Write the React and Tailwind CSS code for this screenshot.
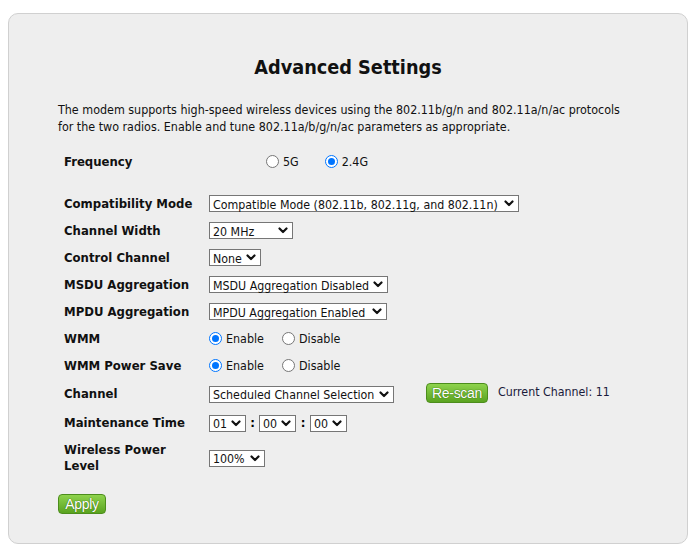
import React from 'react';

const font = { fontFamily: '"DejaVu Sans Condensed", "DejaVu Sans", Verdana, sans-serif' };

const Chevron = () => (
  <svg width="10" height="7" viewBox="0 0 10 7" className="shrink-0">
    <polyline points="1.5,1.5 5,5 8.5,1.5" fill="none" stroke="#111" strokeWidth="2.2" strokeLinecap="round" strokeLinejoin="round" />
  </svg>
);

const FakeSelect = ({ value, width }) => (
  <div
    className="flex items-center justify-between h-[17px] border border-[#767676] bg-white pl-[3px] pr-[4px] text-[12.3px] text-[#111] leading-[14px]"
    style={{ width }}
  >
    <span className="whitespace-nowrap translate-y-[1px]">{value}</span>
    <Chevron />
  </div>
);

const Radio = ({ checked, label }) => (
  <div className="flex items-center gap-[4px] text-[12.4px] text-[#111]">
    {checked ? (
      <span className="w-[13px] h-[13px] rounded-full border-[1.5px] border-[#0075ff] bg-white flex items-center justify-center">
        <span className="w-[7px] h-[7px] rounded-full bg-[#0075ff]" />
      </span>
    ) : (
      <span className="w-[13px] h-[13px] rounded-full border border-[#767676] bg-white" />
    )}
    <span className="translate-y-[1px]">{label}</span>
  </div>
);

const GreenButton = ({ children, className }) => (
  <button
    className={`h-[20px] rounded-[4px] border border-[#4c8d1c] bg-gradient-to-b from-[#8ed34c] to-[#5aa31f] text-white text-[14px] leading-none ${className}`}
    style={{ fontFamily: '"Liberation Sans", Arial, sans-serif', textShadow: '0 0 1px #3a7010, 0 0 1px #3a7010', letterSpacing: '-0.3px' }}
  >
    {children}
  </button>
);

const Row = ({ label, h = 'h-[27px]', children }) => (
  <div className={`flex items-center ${h}`}>
    <div className="w-[145px] text-[13px] font-bold text-[#111] leading-[16px]">{label}</div>
    <div className="flex items-center">{children}</div>
  </div>
);

export default function App() {
  return (
    <div className="min-h-[544px] bg-white pl-[8px] pt-[13px]" style={font}>
      <div className="w-[680px] h-[531px] rounded-[10px] border border-[#d0d0d0] bg-[#eeeeee] pl-[49px]">
        <h1 className="pt-[42px] pr-[49px] text-center text-[19.7px] font-bold text-[#111] leading-[24px]">
          Advanced Settings
        </h1>
        <p className="mt-[21px] text-[12.4px] leading-[17px] text-[#111]">
          The modem supports high-speed wireless devices using the 802.11b/g/n and 802.11a/n/ac protocols
          <br />
          for the two radios. Enable and tune 802.11a/b/g/n/ac parameters as appropriate.
        </p>

        <div className="mt-[13px] pl-[6px] flex flex-col">
          <Row label="Frequency">
            <div className="flex items-center gap-[26px] pl-[57px]">
              <Radio label="5G" />
              <Radio checked label="2.4G" />
            </div>
          </Row>
          <div className="h-[15px]" />
          <Row label="Compatibility Mode">
            <FakeSelect width={310} value="Compatible Mode (802.11b, 802.11g, and 802.11n)" />
          </Row>
          <Row label="Channel Width">
            <FakeSelect width={84} value="20 MHz" />
          </Row>
          <Row label="Control Channel">
            <FakeSelect width={52} value="None" />
          </Row>
          <Row label="MSDU Aggregation">
            <FakeSelect width={179} value="MSDU Aggregation Disabled" />
          </Row>
          <Row label="MPDU Aggregation">
            <FakeSelect width={178} value="MPDU Aggregation Enabled" />
          </Row>
          <Row label="WMM">
            <div className="flex items-center gap-[18px]">
              <Radio checked label="Enable" />
              <Radio label="Disable" />
            </div>
          </Row>
          <Row label="WMM Power Save">
            <div className="flex items-center gap-[18px]">
              <Radio checked label="Enable" />
              <Radio label="Disable" />
            </div>
          </Row>
          <Row label="Channel" h="h-[30px]">
            <FakeSelect width={185} value="Scheduled Channel Selection" />
            <GreenButton className="ml-[32px] w-[62px] -translate-y-[1px]">Re-scan</GreenButton>
            <span className="ml-[10px] text-[12.3px] text-[#1a1a3a] -translate-y-[2px]">Current Channel: 11</span>
          </Row>
          <Row label="Maintenance Time" h="h-[28px]">
            <FakeSelect width={37} value="01" />
            <span className="w-[13px] text-center text-[13px] font-bold">:</span>
            <FakeSelect width={37} value="00" />
            <span className="w-[14px] text-center text-[13px] font-bold">:</span>
            <FakeSelect width={37} value="00" />
          </Row>
          <Row label={<>Wireless Power<br />Level</>} h="h-[42px]">
            <FakeSelect width={56} value="100%" />
          </Row>
        </div>

        <GreenButton className="mt-[15px] w-[48px]">Apply</GreenButton>
      </div>
    </div>
  );
}
